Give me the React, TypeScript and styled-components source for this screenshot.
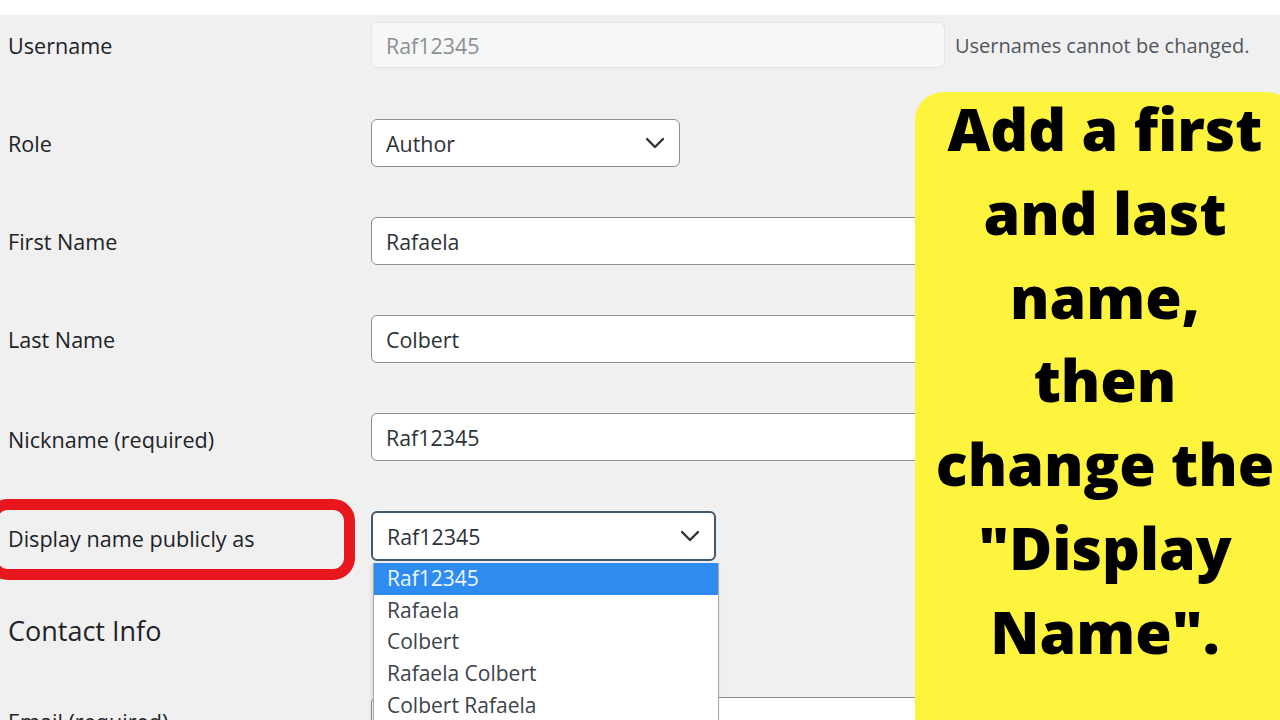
import React from "react";
import styled, { createGlobalStyle } from "styled-components";

const Global = createGlobalStyle`
  html, body {
    margin: 0;
    padding: 0;
    background: #f0f0f1;
    overflow: hidden;
  }
  body {
    font-family: "Open Sans", "Noto Sans", sans-serif;
    color: #1d2327;
  }
`;

const Page = styled.div`
  position: relative;
  width: 1280px;
  height: 720px;
  overflow: hidden;
  background: #f0f0f1;
`;

const TopStrip = styled.div`
  height: 15px;
  background: #ffffff;
`;

const Form = styled.div`
  padding: 6px 0 0 8px;
  display: flex;
  flex-direction: column;
`;

const Row = styled.div<{ $gap?: number }>`
  display: flex;
  align-items: center;
  height: 48px;
  margin-bottom: ${(p) => p.$gap ?? 50}px;
`;

const Label = styled.div<{ $shift?: number }>`
  width: 363px;
  flex: none;
  font-size: 21.6px;
  color: #1d2327;
  padding-top: ${(p) => p.$shift ?? 0}px;
`;

const Field = styled.div<{ $w: number; $disabled?: boolean; $focus?: boolean; $h?: number }>`
  position: relative;
  box-sizing: border-box;
  width: ${(p) => p.$w}px;
  height: ${(p) => p.$h ?? 48}px;
  flex: none;
  display: flex;
  align-items: center;
  justify-content: space-between;
  padding: 0 14px 0 14px;
  border-radius: 6px;
  background: ${(p) => (p.$disabled ? "#f6f7f7" : "#ffffff")};
  border: ${(p) =>
    p.$focus ? "2px solid #3d5a70" : p.$disabled ? "1px solid #e2e4e7" : "1px solid #8c8f94"};
  font-size: 21.4px;
  color: ${(p) => (p.$disabled ? "#8c8f94" : "#2c3338")};
`;

const Hint = styled.div`
  margin-left: 10px;
  font-size: 20px;
  color: #50575e;
  white-space: nowrap;
`;

const Heading = styled.h2`
  margin: 53px 0 48px 0;
  font-size: 27px;
  font-weight: 400;
  line-height: 36px;
  color: #1d2327;
`;

const Options = styled.div`
  position: absolute;
  left: 373px;
  top: 563px;
  width: 344px;
  background: #ffffff;
  border: 1px solid #a7aaad;
  border-top: none;
  box-shadow: -1px 2px 4px rgba(0, 0, 0, 0.12);
  z-index: 2;
`;

const Option = styled.div<{ $active?: boolean }>`
  height: 31.7px;
  line-height: 31.7px;
  padding-left: 13px;
  font-size: 21px;
  color: ${(p) => (p.$active ? "#eef5ff" : "#3c434a")};
  background: ${(p) => (p.$active ? "#2e8cf0" : "transparent")};
`;

const Highlight = styled.div`
  position: absolute;
  left: -14px;
  top: 499px;
  width: 369px;
  height: 81px;
  box-sizing: border-box;
  border: 11px solid #e8161d;
  border-radius: 22px;
  z-index: 3;
`;

const Callout = styled.div`
  position: absolute;
  left: 915px;
  top: 92px;
  width: 380px;
  height: 660px;
  background: #fef33d;
  border-radius: 28px;
  z-index: 4;
`;

const CalloutText = styled.div`
  margin-top: -5px;
  text-align: center;
  white-space: nowrap;
  font-family: "Open Sans", "Noto Sans", sans-serif;
  font-weight: 800;
  font-size: 59px;
  line-height: 83.8px;
  color: #000000;
`;

const Chevron = () => (
  <svg width="20" height="12" viewBox="0 0 20 12" fill="none">
    <polyline
      points="2,2 10,10 18,2"
      stroke="#2c3338"
      strokeWidth="2.4"
      strokeLinecap="round"
      strokeLinejoin="round"
    />
  </svg>
);

const displayOptions = ["Raf12345", "Rafaela", "Colbert", "Rafaela Colbert", "Colbert Rafaela", "Raf12345"];

const calloutLines = ["Add a first", "and last", "name,", "then", "change the", "\"Display", "Name\"."];

export default function App() {
  return (
    <Page>
      <Global />
      <TopStrip />
      <Form>
        <Row>
          <Label>Username</Label>
          <Field $w={574} $h={46} $disabled>
            Raf12345
          </Field>
          <Hint>Usernames cannot be changed.</Hint>
        </Row>
        <Row>
          <Label>Role</Label>
          <Field $w={309}>
            Author
            <Chevron />
          </Field>
        </Row>
        <Row>
          <Label>First Name</Label>
          <Field $w={574}>Rafaela</Field>
        </Row>
        <Row>
          <Label>Last Name</Label>
          <Field $w={574}>Colbert</Field>
        </Row>
        <Row $gap={51}>
          <Label $shift={4}>Nickname (required)</Label>
          <Field $w={574}>Raf12345</Field>
        </Row>
        <Row $gap={0}>
          <Label $shift={5}>Display name publicly as</Label>
          <Field $w={345} $h={50} $focus>
            Raf12345
            <Chevron />
          </Field>
        </Row>
        <Heading>Contact Info</Heading>
        <Row>
          <Label>Email (required)</Label>
          <Field $w={574} />
        </Row>
      </Form>
      <Options>
        {displayOptions.map((o, i) => (
          <Option key={i} $active={i === 0}>
            {o}
          </Option>
        ))}
      </Options>
      <Highlight />
      <Callout>
        <CalloutText>
          {calloutLines.map((line, i) => (
            <div key={i}>{line}</div>
          ))}
        </CalloutText>
      </Callout>
    </Page>
  );
}
